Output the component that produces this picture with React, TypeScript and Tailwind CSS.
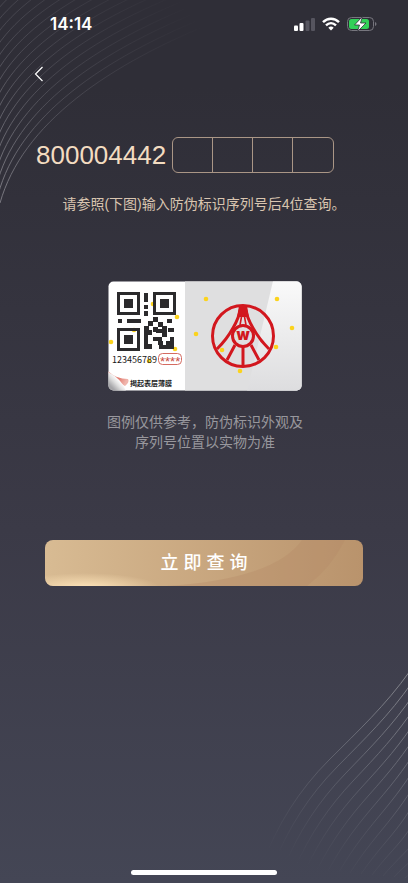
import React from "react";

const upperLines = Array.from({ length: 24 }, (_, i) => i);
const lowerLines = Array.from({ length: 16 }, (_, i) => i);

const finders = [
  [9, 11],
  [45, 11],
  [9, 47],
];

// x, y, width, height of the remaining code modules
const modules = [
  [36, 12, 4, 9], [36, 24, 4, 4], [36, 30, 4, 5],
  [10, 38, 4, 4], [19, 38, 14, 4],
  [45, 36, 5, 5], [59, 38, 5, 4], [40, 40, 5, 5], [50, 41, 5, 5], [54, 45, 5, 4],
  [36, 45, 5, 5], [45, 46, 5, 5], [48, 48, 11, 4], [60, 47, 6, 4],
  [36, 49, 8, 5], [54, 52, 5, 4], [36, 54, 4, 14], [45, 56, 9, 4],
  [40, 63, 4, 5], [50, 60, 5, 4], [62, 56, 4, 12], [51, 64, 15, 4], [58, 60, 4, 4],
];

const dots = [
  [98, 18], [169, 18], [184, 47], [88, 53], [114, 69], [168, 66], [132, 90],
  [45, 23], [69, 36], [3, 61], [67, 68], [26, 49], [41, 80],
];

function Backdrop() {
  return (
    <div aria-hidden="true" className="pointer-events-none absolute inset-0 overflow-hidden">
      <svg className="absolute left-0 top-0" width="240" height="210" viewBox="0 0 240 210" fill="none">
        <defs>
          <linearGradient id="upper" gradientUnits="userSpaceOnUse" x1="0" y1="180" x2="200" y2="20">
            <stop stopColor="#77767e" />
            <stop offset="0.35" stopColor="#55545d" stopOpacity="0.75" />
            <stop offset="1" stopColor="#494851" stopOpacity="0" />
          </linearGradient>
        </defs>
        {upperLines.map((i) => (
          <path
            key={i}
            d={`M${-i * 2} ${203 - i * 8}C${22 - i * 3.5} ${125 - i * 7.5} ${106 - i * 5} ${64 - i * 6.5} ${225 - i * 6} ${18 - i * 6}`}
            stroke="url(#upper)"
          />
        ))}
      </svg>
      <svg className="absolute bottom-0 right-0" width="158" height="223" viewBox="0 0 158 223" fill="none">
        <defs>
          <linearGradient id="lower" gradientUnits="userSpaceOnUse" x1="158" y1="15" x2="70" y2="215">
            <stop stopColor="#85868d" />
            <stop offset="0.45" stopColor="#686a75" stopOpacity="0.85" />
            <stop offset="1" stopColor="#5a5c68" stopOpacity="0" />
          </linearGradient>
        </defs>
        {lowerLines.map((i) => (
          <path
            key={i}
            d={`M${160 + i * 2} ${11 + i * 11.5}C${135 + i * 4} ${46 + i * 9.5} ${109 + i * 6} ${70 + i * 8.5} ${79 + i * 8} ${100 + i * 7}C${49 + i * 10} ${130 + i * 5.5} ${27 + i * 11} ${165 + i * 3} ${12 + i * 11} ${205 + i}`}
            stroke="url(#lower)"
          />
        ))}
      </svg>
    </div>
  );
}

function StatusBar() {
  return (
    <div className="flex h-12 items-center justify-between pl-[50px] pr-[31px]">
      <time className="pt-0.5 font-['Inter','Liberation_Sans',sans-serif] text-[17px] font-semibold text-white">14:14</time>
      <div className="flex items-center gap-[7px]">
        <svg width="21" height="14" viewBox="0 0 21 14" fill="#fff" role="img" aria-label="Signal">
          <rect y="8.5" width="4" height="5.5" rx="1" />
          <rect x="5.5" y="6" width="4" height="8" rx="1" />
          <rect x="11.5" y="3.5" width="4" height="10.5" rx="1" fill="#56555f" />
          <rect x="17" y="1" width="4" height="13" rx="1" fill="#56555f" />
        </svg>
        <svg width="18" height="14" viewBox="0 0 18 14" fill="none" stroke="#fff" strokeWidth="2.4" role="img" aria-label="Wi-Fi">
          <path d="M1 5.2C5.5 0.500 12.500 0.500 17 5.200M4 8.400C7 5.500 11 5.500 14 8.400" />
          <path d="M6.300 10.700Q9 8.400 11.700 10.700L9 13.500Z" fill="#fff" stroke="none" />
        </svg>
        <svg width="30" height="16" viewBox="0 0 30 16" fill="none" role="img" aria-label="Battery charging">
          <rect x="0.5" y="1.5" width="26" height="13" rx="4" stroke="#77767e" />
          <rect x="2" y="3" width="20" height="10" rx="2.5" fill="#32d158" />
          <path d="M28 6v4q1.500-.5 1.500-2T28 6Z" fill="#77767e" />
          <path d="M15.500 0.500 7.500 9h5l-2 6.500 8.500-8.500h-5.500Z" fill="#fff" stroke="#2f2e37" strokeWidth="0.8" />
        </svg>
      </div>
    </div>
  );
}

function SampleLabel() {
  return (
    <svg
      className="block"
      width="194"
      height="110"
      viewBox="0 0 194 110"
      role="img"
      aria-label="防伪标识示例"
      fontFamily="'Noto Sans CJK SC', sans-serif"
    >
      <defs>
        <clipPath id="card"><rect x="0.5" y="0.5" width="193" height="109" rx="5" /></clipPath>
        <linearGradient id="shine" x1="0" y1="0" x2="0" y2="1">
          <stop stopColor="#fafafa" /><stop offset="1" stopColor="#dddddf" />
        </linearGradient>
        <linearGradient id="peel" x1="0" y1="1" x2="1" y2="0">
          <stop offset="0.2" stopColor="#a5a5a8" /><stop offset="0.42" stopColor="#dedede" /><stop offset="0.6" stopColor="#fff" />
        </linearGradient>
        <linearGradient id="film" x1="0" y1="0" x2="1" y2="0.4">
          <stop stopColor="#f3b3aa" /><stop offset="0.6" stopColor="#e0776c" /><stop offset="1" stopColor="#f0b5ac" />
        </linearGradient>
      </defs>
      <g clipPath="url(#card)">
        <rect width="194" height="110" fill="#fff" />
        <rect x="77" width="117" height="110" fill="#dfdfe0" />
        <path d="M165 0h29v110h-55Z" fill="url(#shine)" />
        {dots.map(([x, y]) => <circle key={`${x}-${y}`} cx={x} cy={y} r="2.3" fill="#fbd31d" />)}
        {finders.map(([x, y]) => (
          <g key={`${x}-${y}`}>
            <rect x={x + 1.5} y={y + 1.5} width="20" height="20" fill="none" stroke="#2b2a2c" strokeWidth="3" />
            <rect x={x + 7} y={y + 7} width="9" height="9" fill="#2b2a2c" />
          </g>
        ))}
        {modules.map(([x, y, w, h]) => (
          <rect key={`${x}-${y}`} x={x} y={y} width={w} height={h} fill="#2b2a2c" />
        ))}
        <path d="M0 90Q8 98 20 98 22 101 17 105 12 103 0 92Z" fill="url(#film)" />
        <path d="M0 91Q14 98 18 110H0Z" fill="url(#peel)" />
        <text x="4" y="82" fontSize="9" fill="#171717">123456789</text>
        <rect x="50.5" y="72.5" width="23" height="11" rx="4" fill="#fff" stroke="#d46b61" />
        <text x="52" y="85" fontSize="13" fontFamily="'Liberation Sans', sans-serif" fill="#c94c43">****</text>
        <text x="22" y="105" fontSize="7" fontWeight="700" fill="#222">揭起表层薄膜</text>
        <g fill="none" stroke="#d2171e" strokeWidth="3">
          <circle cx="135" cy="55" r="30.5" />
          <circle cx="135" cy="55" r="10.5" />
          <path d="M133 26Q131 37 125 47 119 58 109 68M137 26Q139 37 145 47 151 58 161 68M135 66v20M127 64l-8 15M143 64l8 15" />
          <path d="M134 33 132 44M136 33 138 44" strokeWidth="1.6" />
        </g>
        <path d="M131 25h8l2 11h-12Z" fill="#d2171e" />
        <text x="135" y="59" textAnchor="middle" fontFamily="Inter, sans-serif" fontSize="15" fontWeight="900" fill="#d2171e">w</text>
      </g>
    </svg>
  );
}

export default function App() {
  return (
    <div className="relative flex min-h-screen flex-col bg-linear-to-b from-[#2f2e37] from-10% via-[#3b3a47] via-60% to-[#444655] font-['Liberation_Sans','Noto_Sans_CJK_SC',sans-serif]">
      <Backdrop />
      <header className="relative">
        <StatusBar />
        <button type="button" aria-label="返回" className="ml-[25px] mt-3 flex size-7 items-center justify-center text-white">
          <svg width="10" height="16" viewBox="0 0 10 16" fill="none" stroke="currentColor" strokeWidth="1.2">
            <path d="M8.500 1 1.500 8l7 7" />
          </svg>
        </button>
      </header>
      <main className="relative flex grow flex-col">
        <form className="flex flex-col" onSubmit={(event) => event.preventDefault()}>
          <div className="mt-[49px] flex items-center gap-1.5 px-9">
            <span className="text-[26px] leading-9 text-[#f3dcc1]">800004442</span>
            <fieldset className="grid h-9 w-[162px] grid-cols-4 divide-x divide-[#aa9686] rounded-md border border-[#aa9686]">
              {[1, 2, 3, 4].map((n) => (
                <input key={n} aria-label={`第${n}位`} inputMode="numeric" maxLength={1} className="min-w-0 bg-transparent text-center text-2xl text-[#f3dcc1] outline-none" />
              ))}
            </fieldset>
          </div>
          <p className="mt-[21px] text-center text-sm text-[#d9c5b0]">请参照(下图)输入防伪标识序列号后4位查询。</p>
          <figure className="mt-[67px] flex flex-col items-center pl-0.5">
            <SampleLabel />
            <figcaption className="mt-[21px] text-center text-sm text-[#98979d]">
              图例仅供参考，防伪标识外观及
              <br />
              序列号位置以实物为准
            </figcaption>
          </figure>
          <button type="submit" className="relative mx-[45px] mt-[88px] h-[46px] overflow-hidden rounded-lg bg-linear-to-r from-[#d8bb93] to-[#b9936c] text-lg font-medium text-white">
            <svg aria-hidden="true" className="absolute inset-0 size-full" viewBox="0 0 318 46" preserveAspectRatio="none">
              <defs>
                <radialGradient id="glow"><stop stopColor="#ffe5ba" /><stop offset="1" stopColor="#ffe5ba" stopOpacity="0" /></radialGradient>
              </defs>
              <ellipse cx="40" cy="48" rx="75" ry="15" fill="url(#glow)" />
              <path d="M257 0h43q-14 28-38 46H25Q218 55 257 0Z" fill="#b58a66" fillOpacity="0.35" />
            </svg>
            <span className="relative">立 即 查 询</span>
          </button>
        </form>
      </main>
      <footer className="relative flex justify-center pb-2">
        <div className="h-[5px] w-[146px] rounded-full bg-white" />
      </footer>
    </div>
  );
}
